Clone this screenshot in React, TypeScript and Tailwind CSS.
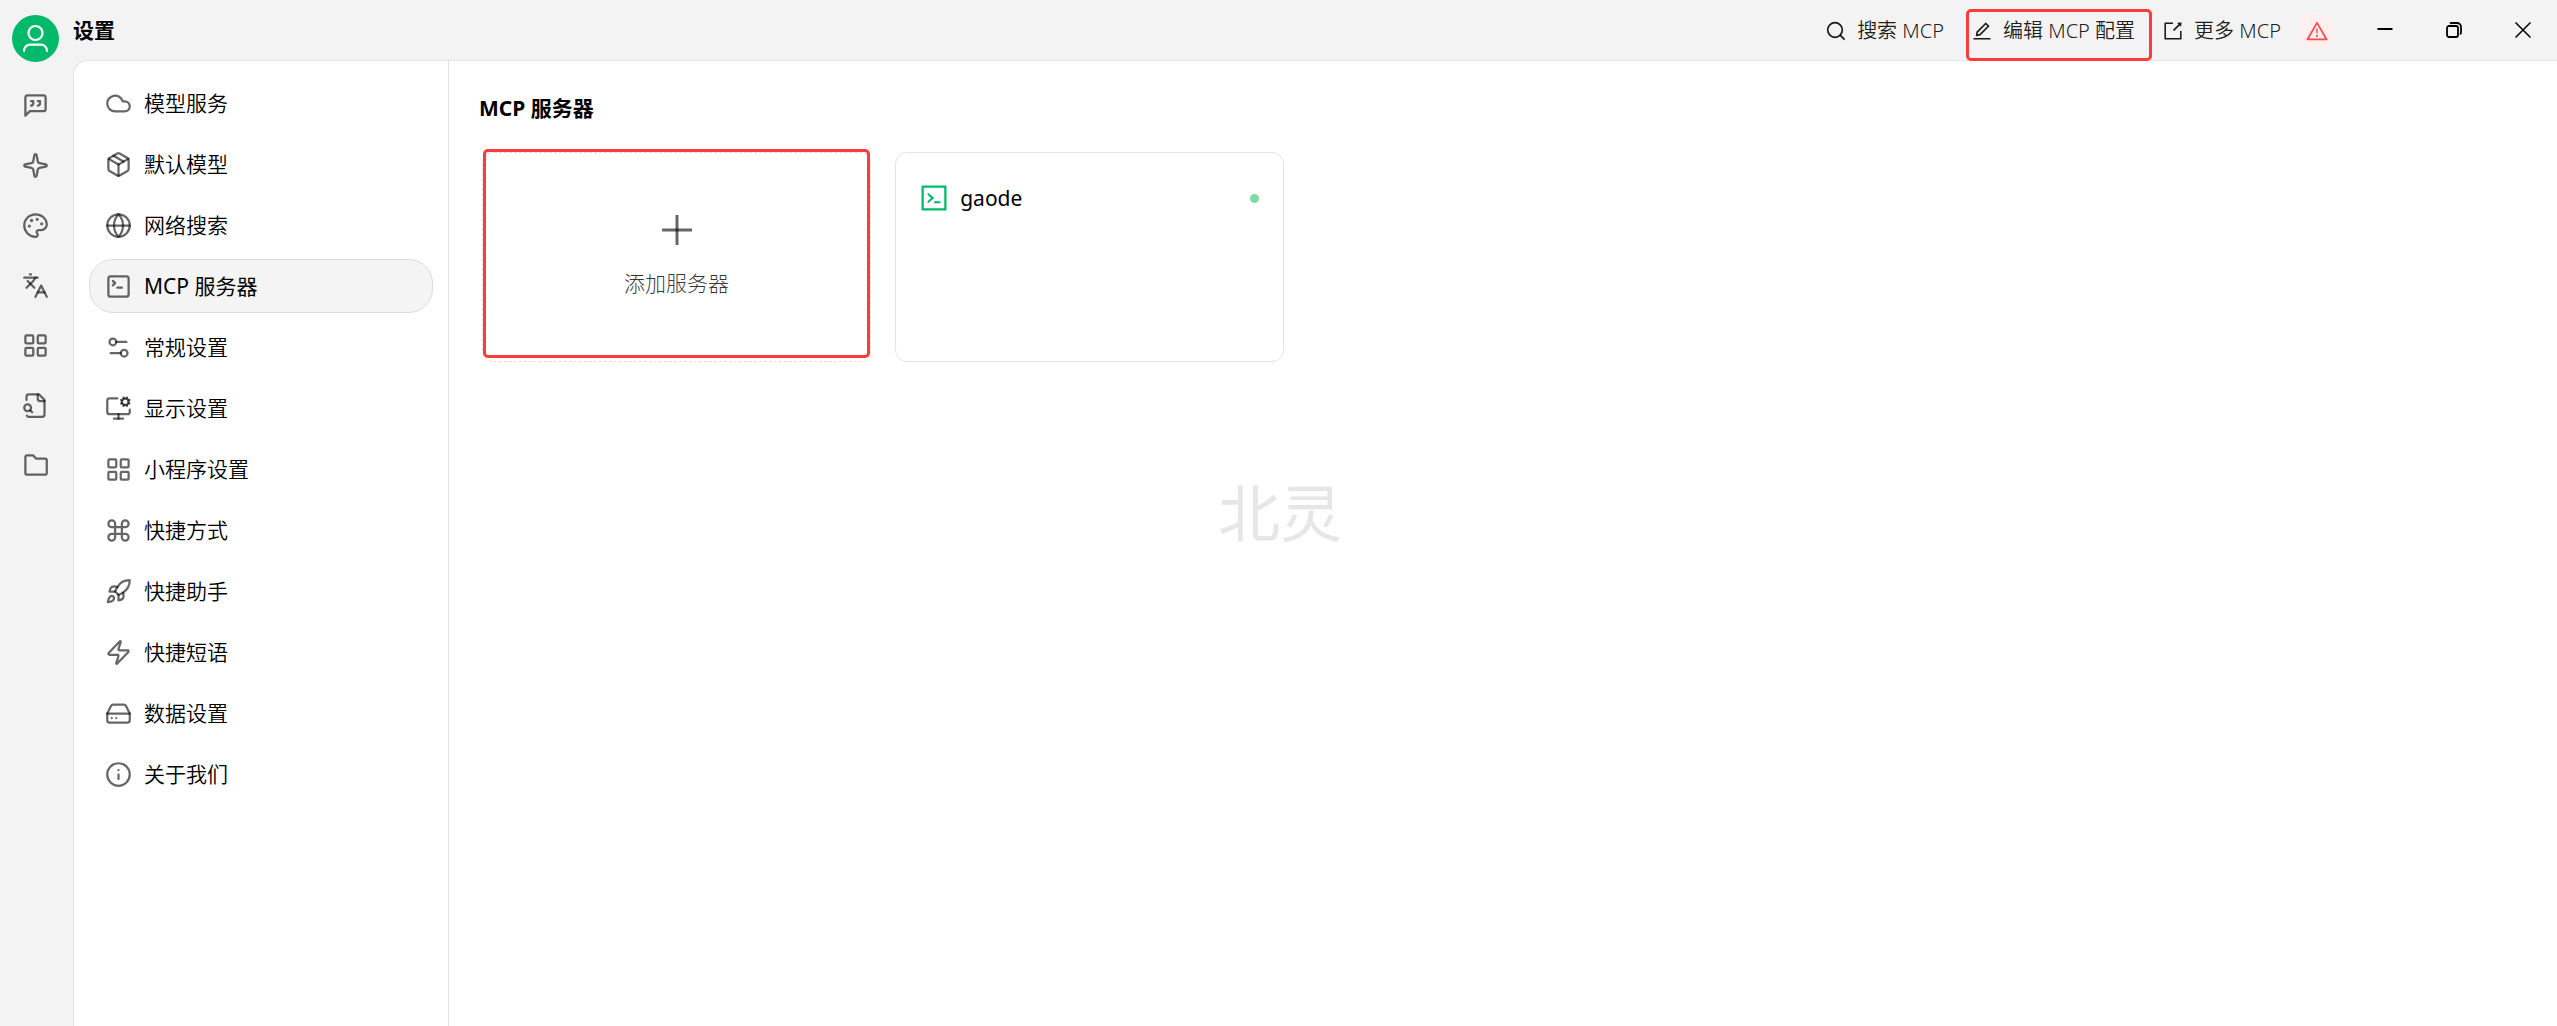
import type { ComponentType, ReactNode } from "react";
import {
  Cloud,
  Command,
  Globe,
  HardDrive,
  Info,
  Languages,
  LayoutGrid,
  MonitorCog,
  Package,
  Palette,
  Rocket,
  Settings2,
  Sparkle,
  SquareTerminal,
  Zap,
} from "lucide-react";
import { AiOutlineCode, AiOutlineEdit, AiOutlineExport, AiOutlineWarning } from "react-icons/ai";
import { clsx } from "clsx";

type IconType = ComponentType<{ className?: string }>;

function LineIcon({ className, children }: { className?: string; children: ReactNode }) {
  return (
    <svg
      viewBox="0 0 24 24"
      fill="none"
      stroke="currentColor"
      strokeWidth="2"
      strokeLinecap="round"
      strokeLinejoin="round"
      className={className}
    >
      {children}
    </svg>
  );
}

function ChatQuote({ className }: { className?: string }) {
  return (
    <LineIcon className={className}>
      <path d="M21 15a2 2 0 0 1-2 2H7l-4 4V5a2 2 0 0 1 2-2h14a2 2 0 0 1 2 2z" />
      <path d="M8 12a2 2 0 0 0 2-2V8H8" />
      <path d="M14 12a2 2 0 0 0 2-2V8h-2" />
    </LineIcon>
  );
}

function FileSearch({ className }: { className?: string }) {
  return (
    <LineIcon className={className}>
      <path d="M14 2v4a2 2 0 0 0 2 2h4" />
      <path d="M4.268 21a2 2 0 0 0 1.727 1H18a2 2 0 0 0 2-2V7l-5-5H6a2 2 0 0 0-2 2v3" />
      <path d="m9 18-1.5-1.5" />
      <circle cx="5" cy="14" r="3" />
    </LineIcon>
  );
}

function Folder({ className }: { className?: string }) {
  return (
    <LineIcon className={className}>
      <path d="M3 4.5A1.5 1.5 0 0 1 4.5 3h5.3l2.7 2.800h8A1.5 1.5 0 0 1 22 7.300v11.400a1.5 1.5 0 0 1-1.5 1.500h-16A1.5 1.5 0 0 1 3 18.700z" />
    </LineIcon>
  );
}

function SearchIcon({ className }: { className?: string }) {
  return (
    <svg viewBox="0 0 22 22" fill="none" stroke="currentColor" strokeWidth="1.7" className={className}>
      <circle cx="10" cy="10" r="7.3" />
      <path d="m15.2 15.2 4.4 4.4" />
    </svg>
  );
}

const railItems: { name: string; icon: IconType }[] = [
  { name: "助手", icon: ChatQuote },
  { name: "智能体", icon: Sparkle },
  { name: "绘画", icon: Palette },
  { name: "翻译", icon: Languages },
  { name: "小程序", icon: LayoutGrid },
  { name: "知识库", icon: FileSearch },
  { name: "文件", icon: Folder },
];

const menuItems: { name: string; icon: IconType; active?: boolean }[] = [
  { name: "模型服务", icon: Cloud },
  { name: "默认模型", icon: Package },
  { name: "网络搜索", icon: Globe },
  { name: "MCP 服务器", icon: SquareTerminal, active: true },
  { name: "常规设置", icon: Settings2 },
  { name: "显示设置", icon: MonitorCog },
  { name: "小程序设置", icon: LayoutGrid },
  { name: "快捷方式", icon: Command },
  { name: "快捷助手", icon: Rocket },
  { name: "快捷短语", icon: Zap },
  { name: "数据设置", icon: HardDrive },
  { name: "关于我们", icon: Info },
];

const toolbarItems: { name: string; icon: IconType; marked?: boolean }[] = [
  { name: "搜索 MCP", icon: SearchIcon },
  { name: "编辑 MCP 配置", icon: AiOutlineEdit, marked: true },
  { name: "更多 MCP", icon: AiOutlineExport },
];

function Rail() {
  return (
    <aside className="flex w-[73px] shrink-0 flex-col items-center pt-[15px] pr-[2px]">
      <button aria-label="用户" className="size-[47px] rounded-full bg-[#00b96b] text-white">
        <svg viewBox="0 0 47 47" fill="none" stroke="currentColor" strokeWidth="2.2" strokeLinecap="round">
          <circle cx="23.5" cy="18" r="7" />
          <path d="M12 36v-.3a6 6 0 0 1 6-6h11a6 6 0 0 1 6 6v.3" />
        </svg>
      </button>
      <nav className="mt-[30px] flex flex-col gap-[33px]">
        {railItems.map((item) => (
          <a key={item.name} href="#" aria-label={item.name} className="text-black/60">
            <item.icon className="size-[27px]" />
          </a>
        ))}
      </nav>
    </aside>
  );
}

function WindowControls() {
  return (
    <div className="ml-[15px] flex h-full text-black">
      <button aria-label="最小化" className="flex w-[69px] items-center justify-center">
        <svg viewBox="0 0 16 16" className="size-4" stroke="currentColor" strokeWidth="2">
          <path d="M.5 7h15" />
        </svg>
      </button>
      <button aria-label="还原" className="flex w-[69px] items-center justify-center">
        <svg viewBox="0 0 16 16" className="size-4" fill="none" stroke="currentColor" strokeWidth="1.8">
          <rect x="1" y="4" width="11" height="11" rx="2" />
          <path d="M3.8 1.4C4.500 1.100 5 1 6 1h5a4 4 0 0 1 4 4v5c0 1-.2 1.800-.8 2.500" />
        </svg>
      </button>
      <button aria-label="关闭" className="flex w-[69px] items-center justify-center">
        <svg viewBox="0 0 16 16" className="size-4" stroke="currentColor" strokeWidth="1.5">
          <path d="m.5.5 15 15M15.5.5l-15 15" />
        </svg>
      </button>
    </div>
  );
}

function Header() {
  return (
    <header className="flex h-[60px] shrink-0 items-center justify-between">
      <h1 className="text-[21px] leading-8 font-bold">设置</h1>
      <div className="flex h-full items-center">
        <div className="flex items-center gap-[9px] pt-[2px]">
          {toolbarItems.map((item) => (
            <button
              key={item.name}
              className="relative flex items-center gap-[10px] px-[9px] text-[20px] leading-9 font-[350] text-black/90"
            >
              <item.icon className="size-[22px]" />
              {item.name}
              {item.marked && (
                <span className="absolute -top-1 -right-2 -bottom-3 left-1 rounded-[5px] border-3 border-[#ff3b3b]" />
              )}
            </button>
          ))}
          <button
            aria-label="警告"
            className="flex size-9 items-center justify-center rounded-full bg-[#ffefee] text-[#ff4d4f]"
          >
            <AiOutlineWarning className="size-6" />
          </button>
        </div>
        <WindowControls />
      </div>
    </header>
  );
}

function SettingsMenu() {
  return (
    <nav className="flex w-[375px] shrink-0 flex-col gap-[7px] border-r border-[#e3e3e3] p-[15px]">
      {menuItems.map((item) => (
        <a
          key={item.name}
          href="#"
          className={clsx(
            "flex h-[54px] items-center gap-3 rounded-[24px] border px-[15px] text-[21px]",
            item.active ? "border-[#dcdcdc] bg-[#f4f4f4] font-normal" : "border-transparent font-[350]",
          )}
        >
          <item.icon className="size-[27px] text-black/60" />
          <span className="pt-[2px]">{item.name}</span>
        </a>
      ))}
    </nav>
  );
}

function ServerList() {
  return (
    <main className="flex-1 px-[30px] pt-[31px]">
      <h2 className="text-[21px] leading-8 font-bold">MCP 服务器</h2>
      <div className="mt-7 grid grid-cols-5 gap-6 px-[3px]">
        <button className="relative flex h-[210px] flex-col items-center justify-center gap-[22px] rounded-xl border border-dashed border-[#dcdcdc] text-[21px] leading-8 font-light text-black/80">
          <svg viewBox="0 0 30 30" className="size-[30px] text-black/60" stroke="currentColor" strokeWidth="3">
            <path d="M15 0v30" />
            <path d="M0 15h30" />
          </svg>
          添加服务器
          <span className="absolute inset-x-0 -top-1 bottom-[3px] rounded-[5px] border-3 border-[#ff3b3b]" />
        </button>
        <article className="h-[210px] rounded-xl border border-[#e3e3e3] px-[22px] pt-[29px]">
          <div className="flex items-center">
            <AiOutlineCode className="size-8 text-[#00b96b]" />
            <h3 className="ml-[10px] text-[21px] leading-8 font-normal">gaode</h3>
            <span className="mr-[2px] ml-auto size-[9px] rounded-full bg-[#7edc9f]" />
          </div>
        </article>
      </div>
    </main>
  );
}

export default function App() {
  return (
    <div className="flex min-h-screen bg-[#f3f3f3] font-['Noto_Sans','Noto_Sans_CJK_SC',sans-serif] text-black">
      <Rail />
      <div className="flex min-w-0 flex-1 flex-col">
        <Header />
        <div className="flex flex-1 rounded-tl-[15px] border-t border-l border-[#e3e3e3] bg-white">
          <SettingsMenu />
          <ServerList />
        </div>
      </div>
      <div className="pointer-events-none fixed inset-0 flex items-center justify-center pl-[3px] text-[62px] font-normal text-[#e6e6e6]">
        北灵
      </div>
    </div>
  );
}
